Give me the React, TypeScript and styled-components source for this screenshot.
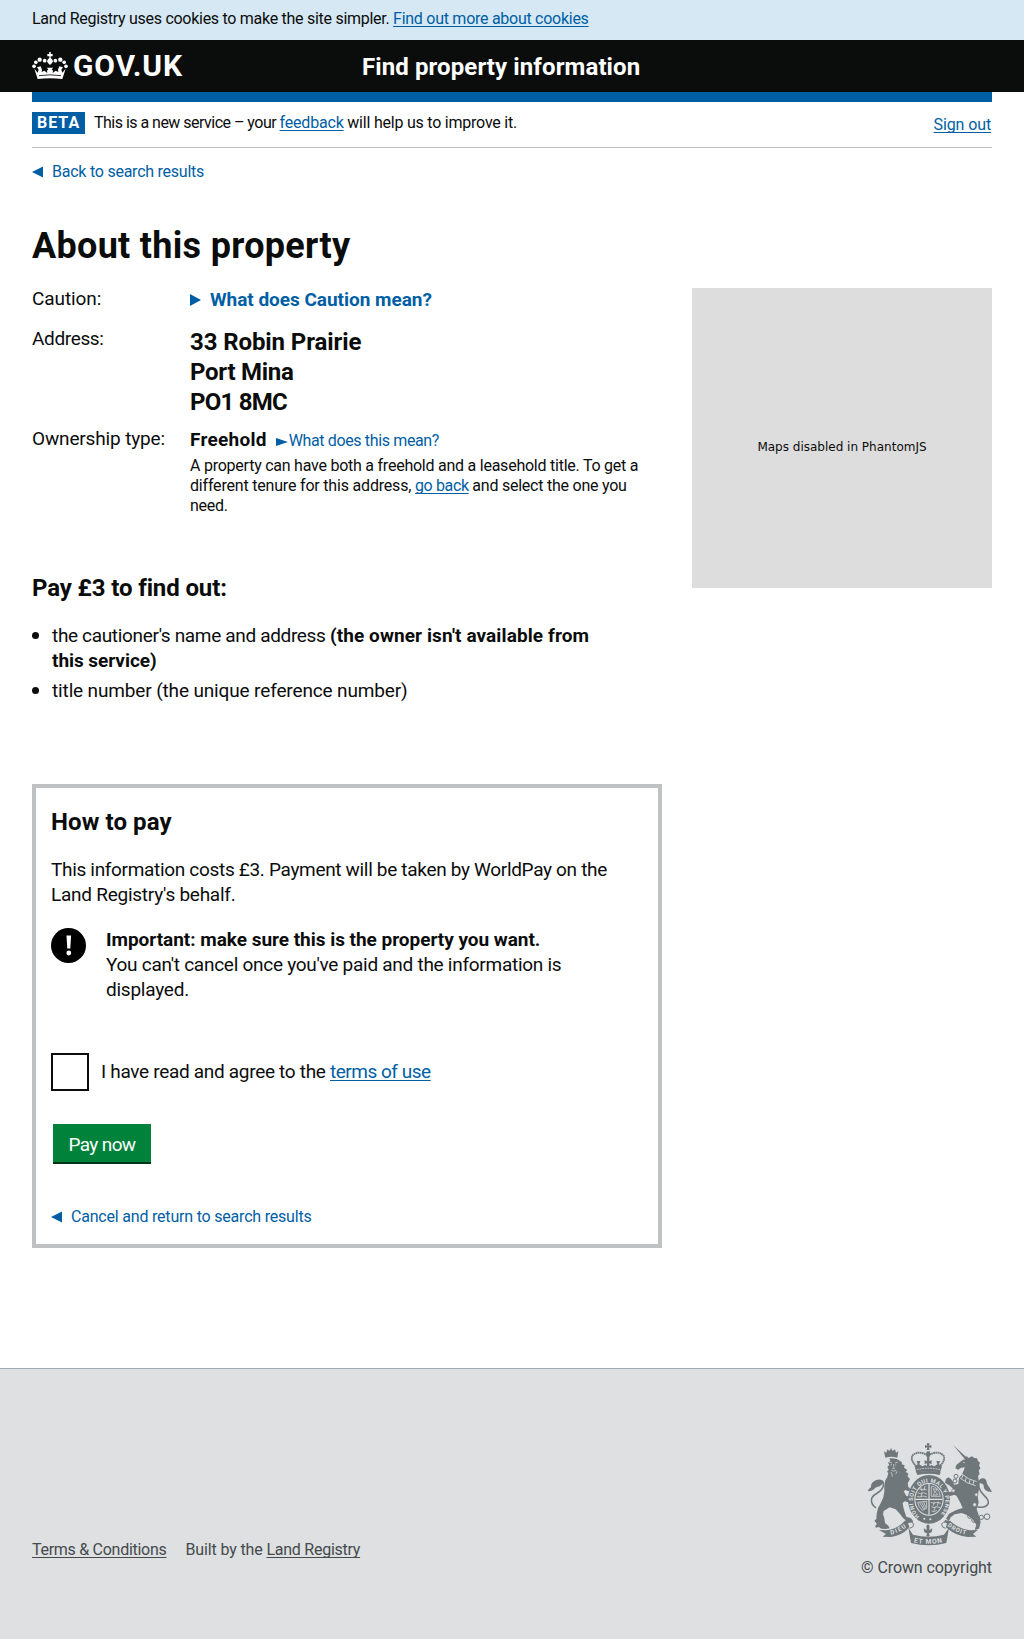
import React from "react";
import styled, { createGlobalStyle } from "styled-components";

const Global = createGlobalStyle`
  body {
    margin: 0;
    background: #fff;
    color: #0b0c0c;
    font: 400 16px/20px Roboto, "Liberation Sans", sans-serif;
  }
  *, *::before, *::after { box-sizing: border-box; }
  h1, h2, p, ul, dl, dt, dd { margin: 0; padding: 0; font-weight: 400; }
`;

const Run = styled.span<{ $ls?: number }>`
  letter-spacing: ${(p) => p.$ls ?? 0}px;
`;

const Strong = styled.strong<{ $ls?: number }>`
  font-weight: 700;
  letter-spacing: ${(p) => p.$ls ?? 0}px;
`;

const Link = styled.a<{ $ls?: number }>`
  color: #005ea5;
  letter-spacing: ${(p) => p.$ls ?? 0}px;
  text-decoration: underline;
  text-decoration-thickness: 1px;
  text-underline-offset: 2px;
  text-decoration-skip-ink: none;
`;

const CookieBar = styled.div`
  height: 40px;
  padding: 9px 32px 0;
  background: #d5e8f3;
`;

const Header = styled.header`
  display: flex;
  height: 52px;
  padding: 0 32px;
  background: #0b0c0c;
  color: #fff;
`;

const Brand = styled.a`
  display: flex;
  width: 330px;
  padding-top: 12px;
  gap: 5px;
  color: #fff;
  font-size: 30px;
  font-weight: 700;
  line-height: 30px;
  letter-spacing: 0.85px;
  svg { display: block; }
`;

const BrandName = styled.span`
  margin-top: -1px;
`;

const ServiceName = styled.span`
  padding-top: 12px;
  font-size: 24px;
  font-weight: 700;
  line-height: 30px;
  letter-spacing: 0.1px;
`;

const Page = styled.main`
  width: 960px;
  height: 1276px;
  margin: 0 32px;
  border-top: 10px solid #005ea5;
`;

const PhaseBanner = styled.div`
  display: flex;
  height: 46px;
  padding-top: 10px;
  border-bottom: 1px solid #bfc1c3;
`;

const PhaseTag = styled.strong`
  width: 53px;
  height: 22px;
  padding-left: 5px;
  background: #005ea5;
  color: #fff;
  font-weight: 700;
  line-height: 22px;
  letter-spacing: 1px;
`;

const PhaseText = styled.span`
  flex: 1;
  padding: 1px 0 0 9px;
`;

const SignOut = styled.span`
  padding: 3px 1px 0 0;
`;

const ArrowLink = styled.a<{ $ls: number; $top: number }>`
  display: flex;
  align-items: center;
  gap: 9px;
  height: 20px;
  margin-top: ${(p) => p.$top}px;
  color: #005ea5;
  letter-spacing: ${(p) => p.$ls}px;
`;

const Title = styled.h1`
  margin-top: 43px;
  font-size: 36px;
  font-weight: 700;
  line-height: 42px;
  letter-spacing: 0.3px;
`;

const Columns = styled.div`
  display: flex;
  justify-content: space-between;
  margin-top: 21px;
`;

const Details = styled.dl`
  display: grid;
  grid-template-columns: 158px 455px;
  grid-template-rows: 40px 100px auto;
  margin-top: -2px;
  font-size: 19px;
  line-height: 25px;
`;

const Label = styled.dt<{ $ls: number }>`
  letter-spacing: ${(p) => p.$ls}px;
`;

const Value = styled.dd`
  padding-top: 1px;
`;

const Summary = styled.a`
  display: flex;
  align-items: center;
  gap: 9px;
  color: #005ea5;
  font-weight: 700;
  letter-spacing: -0.03px;
`;

const AddressLine = styled.div<{ $ls: number }>`
  font-size: 24px;
  font-weight: 700;
  line-height: 30px;
  letter-spacing: ${(p) => p.$ls}px;
`;

const Tenure = styled.div`
  display: flex;
  align-items: baseline;
  svg { margin: 0 1px 0 9px; }
`;

const TenureHelp = styled.a`
  color: #005ea5;
  font-size: 16px;
  letter-spacing: -0.36px;
`;

const SmallText = styled.p`
  margin-top: 3px;
  font-size: 16px;
  line-height: 20px;
`;

const MapBox = styled.div`
  width: 300px;
  height: 300px;
  padding-top: 150px;
  background: #ddd;
  font: 12px/18px "DejaVu Sans", sans-serif;
  text-align: center;
`;

const Heading = styled.h2<{ $top: number; $ls: number }>`
  margin-top: ${(p) => p.$top}px;
  font-size: 24px;
  font-weight: 700;
  line-height: 30px;
  letter-spacing: ${(p) => p.$ls}px;
`;

const Bullets = styled.ul`
  width: 565px;
  margin-top: 20px;
  list-style: none;
  font-size: 19px;
  line-height: 25px;
`;

const Bullet = styled.li`
  display: flex;
  gap: 13px;
  margin-bottom: 5px;
  &::before {
    content: "";
    flex: none;
    width: 7px;
    height: 7px;
    margin-top: 9px;
    border-radius: 50%;
    background: #0b0c0c;
  }
`;

const PayBox = styled.section`
  width: 630px;
  height: 464px;
  margin-top: 81px;
  padding: 0 15px;
  border: 4px solid #bfc1c3;
`;

const Paragraph = styled.p<{ $width: number; $top?: number }>`
  width: ${(p) => p.$width}px;
  margin-top: ${(p) => p.$top ?? 0}px;
  font-size: 19px;
  line-height: 25px;
`;

const Warning = styled.div`
  display: flex;
  gap: 20px;
  margin-top: 20px;
`;

const WarningIcon = styled.svg`
  display: block;
  flex: none;
  margin-top: 1px;
`;

const Agree = styled.label`
  display: flex;
  gap: 12px;
  height: 38px;
  margin-top: 51px;
  font-size: 19px;
  line-height: 38px;
`;

const Checkbox = styled.span`
  width: 38px;
  height: 38px;
  border: 2px solid #0b0c0c;
`;

const PayButton = styled.button`
  display: block;
  width: 98px;
  height: 40px;
  margin: 33px 0 0 2px;
  padding: 2px 0 0;
  border: 0;
  border-bottom: 2px solid #003618;
  background: #00823b;
  color: #fff;
  font: 400 19px/25px Roboto, "Liberation Sans", sans-serif;
  letter-spacing: -0.63px;
`;

const Footer = styled.footer`
  display: flex;
  justify-content: space-between;
  height: 271px;
  padding: 74px 32px 0;
  border-top: 1px solid #a1acb2;
  background: #dee0e2;
  color: #454a4c;
`;

const FooterLinks = styled.div`
  display: flex;
  gap: 19px;
  padding-top: 97px;
`;

const FooterLink = styled(Link)`
  color: #454a4c;
`;

const Copyright = styled.div`
  display: flex;
  flex-direction: column;
  align-items: flex-end;
  gap: 12px;
  letter-spacing: -0.09px;
  svg { display: block; }
`;

const LeftArrow = () => (
  <svg width="11" height="12" viewBox="0 0 11 12">
    <path d="M0 6 11 .5v11Z" fill="#005ea5" />
  </svg>
);

const Crown = () => (
  <svg width="36" height="27" viewBox="96 155 108 81" fill="#fff">
    <path d="M146.500 156h7l-1.500 5h6v7h-6v5q6 4 7 10-2 7-9 11-7-4-9-11 1-6 7-10v-5h-6v-7h6Z" />
    {[
      [102, 198, 5.5],
      [107.5, 186, 5.5],
      [119, 178, 6.5],
      [134, 181, 5.5],
      [166, 181, 5.5],
      [181, 178, 6.5],
      [192.5, 186, 5.5],
      [198, 198, 5.5],
    ].map(([x, y, r]) => (
      <circle key={x} cx={x} cy={y} r={r} />
    ))}
    <path d="M103 205l10 12 3-9-5-7 11-3 4 10-1 7 8-4 9 7-1-7 4-4-5-5h20l-5 5 4 4-1 7 9-7 8 4-1-7 4-10 11 3-5 7 3 9 10-12-10 31q-37-5-74 0Z" />
    <path
      d="M117 226q33-5 66 0"
      stroke="#0b0c0c"
      strokeWidth="2.5"
      fill="none"
    />
  </svg>
);

const INK = "#6f777b";
const PAPER = "#dee0e2";

const Crest = () => (
  <svg width="125" height="103" viewBox="50 41 375 309" fill={INK}>
    {/* lion */}
    <path d="M105 85l-4-19 7 4 3-10 7 5 4-9 5 9 7-5 3 10 7-4-3 19q-18-5-36 0Z" />
    <path d="M107 90q16-6 34 0l8 5 6 4-1 6 9 3-2 7 10 7-5 5 9 7-4 6 8 9-3 5-4 8 2 11 7 7-6 6-9-4-6 4 8 14 14 2 5 8-5 14-9-5-9-3-7 4 2 14 4 14 5 14 14 5 6 8-2 12-8-5-9 3-7-5 4-7-8-7-9-12-13-14-18-6-18 11-2 10 4 12 2 14 10 8 4 8-12 2-13-1-8-5-8 2-3-5 5-4-2-8-3 1-1-7 5-2 1-16 4-18 8-14 8-18 3-17 0-16 3-18 6-10 3-12-4-4 5-6-4-9 6-5-4-7 7-5-3-8Z" />
    <path
      d="M77 236q-17-12-13-29 5-10 17-16 15-9 18-21 3-10-5-16"
      fill="none"
      stroke={INK}
      strokeWidth="4.5"
    />
    <path d="M52 185q5-9 10-11-1-11 7-17 10-8 22-6 8 2 7 9-6 11-16 12-8 2-11 8-7 7-19 5Z" />
    <path
      d="M116 98l9 3M134 101l9-3M121 106l4 1M138 107l-4 0M130 104v10M126 117h8M123 123q8 5 15 0M122 128q4 6 4 14M140 126q-1 6-5 9"
      fill="none"
      stroke={PAPER}
      strokeWidth="2"
    />
    {/* unicorn */}
    <path d="M309 48l41 37-5 6Z" />
    <path d="M345 90L349 79L354 86L365 81L372 86L380 87L383 95L389 100L386 108L390 117L385 124L388 134L383 140L386 158L386 180L382 200L385 220L379 240L386 260L391 278L386 298L373 302L378 286L366 269L350 257L334 251L313 255L301 264L296 275L287 268L296 253L318 242L337 236L330 220L319 200L312 196L298 201L289 196L297 188L310 186L306 176L296 168L284 160L287 148L295 144L304 151L312 166L324 164L326 146L334 136L341 122L343 114L333 115L323 121L315 117L318 107L328 99L338 91Z" />
    <path
      d="M381 232q25 6 33-10 2-10-12-23-13-12-16-25-2-12 3-22"
      fill="none"
      stroke={INK}
      strokeWidth="4.5"
    />
    <path d="M386 162q-2-12 9-15 13-1 14 12 2 10 8 15l8 14q-14 0-20-6-6-6-5-14-3-8-14-6Z" />
    <path
      d="M333 133q20 18 46 24M329 146q20 17 47 23M338 137l-4 10M348 144l-3 11M359 150l-2 12M370 155l-2 11"
      fill="none"
      stroke={PAPER}
      strokeWidth="2.5"
    />
    <path d="M338 99l6 1" stroke={PAPER} strokeWidth="2" />
    <g fill="none" stroke={INK} strokeWidth="3">
      <circle cx="317" cy="141" r="6" />
      <circle cx="314" cy="155" r="6" />
      <circle cx="358" cy="261" r="6" />
      <circle cx="371" cy="272" r="7" />
      <circle cx="393" cy="264" r="6.5" />
      <circle cx="410" cy="262" r="8.500" />
      <path d="M378 270l9-4" />
    </g>
    <g fill={PAPER} stroke={INK} strokeWidth="2">
      <circle cx="378" cy="196" r="5" />
      <circle cx="373" cy="226" r="5.5" />
      <circle cx="309" cy="184" r="5" />
    </g>
    {/* royal crown */}
    <path d="M229 42h9l-2 7 7-2v9l-7-2 2 8h-9l2-8-7 2v-9l7 2Z" />
    <path
      d="M199 112q-22-22-11-35 12-10 27-6 15 3 18 12 3-9 18-12 15-4 27 6 11 13-11 35"
      fill="none"
      stroke={INK}
      strokeWidth="5.5"
      strokeDasharray="5 1.2"
    />
    <path d="M230 66h8l3 8-4 9v13l7-4v13l-7-3 1 11h-9l1-11-7 3V92l7 4V83l-4-9Z" />
    <path d="M193 111l9-6-3-10h11l-3 10 9 6 9-4 9 6 9-6 9 4 9-6-3-10h11l-3 10 9 6-6 19q-36-8-71 0Z" />
    <path
      d="M200 121q35-8 69 0"
      fill="none"
      stroke={PAPER}
      strokeWidth="2.5"
      strokeDasharray="5 3"
    />
    <path d="M198 129q36-8 73 0l-3 8q-34-7-67 0Z" />
    {/* garter and shield */}
    <ellipse cx="236" cy="210" rx="63" ry="73" />
    <ellipse cx="236" cy="210" rx="44" ry="49" fill={PAPER} />
    <ellipse cx="236" cy="210" rx="41" ry="46" />
    <path d="M236 164v92M195 210h82" stroke={PAPER} strokeWidth="3.5" fill="none" />
    <g fill="none" stroke={PAPER} strokeWidth="2.2">
      <path d="M206 178l7 3 8-2 9 3M202 190l8 3 9-3 11 4M200 201l9 2 9-3 12 3M211 173l4 12M224 170l-3 14M215 190l-3 13" />
      <path d="M242 219l8 3 9-3 13 3M243 232l8 3 9-3 9 3M244 245l8 2 7-4M252 217l-3 12M264 217l-3 12M255 232l-4 12" />
      <path d="M243 172h8l13 9 6 20h-27ZM249 178l11 3-5 7 8 8-14 2 4-9Z" />
      <path d="M202 219q3 14 14 24l13-6V216ZM208 220l12 20M214 219l10 20M220 218l7 17" />
    </g>
    <defs>
      <path id="garter" d="M208 261A49 56 0 1 1 265 261" />
      <path id="dieu" d="M122 316q30-7 51-27" />
      <path id="etmon" d="M190 339q45 9 88 0" />
      <path id="droit" d="M291 289q26 25 72 29" />
    </defs>
    <text fill={PAPER} fontFamily="Roboto, sans-serif" fontSize="17" fontWeight="700">
      <textPath href="#garter" textLength="258">
        HONI SOIT QUI MAL Y PENSE
      </textPath>
    </text>
    <circle cx="222" cy="268" r="3" fill={PAPER} />
    <circle cx="240" cy="270" r="3" fill={PAPER} />
    {/* motto ribbon */}
    <path d="M86 302l22 1q34-4 55-28l13-3 8 18-9 6q-22 24-54 27l-24-1 10-8Z" />
    <path d="M382 302l-22 1q-34-4-60-28l-16-3-6 18 12 6q27 24 62 27l26-1-10-8Z" />
    <path
      d="M173 280q13-5 17 5 1 9-12 12M290 280q-12-5-16 5-1 9 12 12"
      fill={PAPER}
      stroke={INK}
      strokeWidth="3"
    />
    <path d="M174 295l14 21q47 12 93 0l15-21-8 46q-52 14-106 0Z" />
    <path d="M228 290l5-6 5 6-1 12 9-5-2 12-8 3 2 8-5 2-5-2 2-8-8-3-2-12 9 5Z" />
    <g fill={PAPER} fontFamily="Roboto, sans-serif" fontWeight="700">
      <text fontSize="18">
        <textPath href="#dieu" textLength="52">DIEU</textPath>
      </text>
      <text fontSize="20">
        <textPath href="#etmon" textLength="86">ET MON</textPath>
      </text>
      <text fontSize="18">
        <textPath href="#droit" textLength="62">DROIT</textPath>
      </text>
    </g>
  </svg>
);

export default function App() {
  return (
    <>
      <Global />
      <CookieBar>
        <Run $ls={-0.28}>Land Registry uses cookies to make the site simpler. </Run>
        <Link $ls={-0.27}>Find out more about cookies</Link>
      </CookieBar>
      <Header>
        <Brand>
          <Crown />
          <BrandName>GOV.UK</BrandName>
        </Brand>
        <ServiceName>Find property information</ServiceName>
      </Header>
      <Page>
        <PhaseBanner>
          <PhaseTag>BETA</PhaseTag>
          <PhaseText>
            <Run $ls={-0.52}>This is a new service – your </Run>
            <Link $ls={-0.19}>feedback</Link>
            <Run $ls={-0.22}> will help us to improve it.</Run>
          </PhaseText>
          <SignOut>
            <Link $ls={-0.12}>Sign out</Link>
          </SignOut>
        </PhaseBanner>
        <ArrowLink $ls={-0.24} $top={14}>
          <LeftArrow />
          Back to search results
        </ArrowLink>
        <Title>About this property</Title>
        <Columns>
          <Details>
            <Label $ls={-0.1}>Caution:</Label>
            <Value>
              <Summary>
                <svg width="11" height="12" viewBox="0 0 11 12">
                  <path d="M0 0 11 6 0 12Z" fill="#005ea5" />
                </svg>
                What does Caution mean?
              </Summary>
            </Value>
            <Label $ls={-0.35}>Address:</Label>
            <Value>
              <AddressLine $ls={-0.1}>33 Robin Prairie</AddressLine>
              <AddressLine $ls={-0.27}>Port Mina</AddressLine>
              <AddressLine $ls={-0.75}>PO1 8MC</AddressLine>
            </Value>
            <Label $ls={-0.15}>Ownership type:</Label>
            <Value>
              <Tenure>
                <Strong $ls={0.26}>Freehold</Strong>
                <svg width="12" height="8" viewBox="0 0 12 8">
                  <path d="M0 0 12 4 0 8Z" fill="#005ea5" />
                </svg>
                <TenureHelp>What does this mean?</TenureHelp>
              </Tenure>
              <SmallText>
                <Run $ls={-0.24}>
                  A property can have both a freehold and a leasehold title. To get a
                </Run>{" "}
                <Run $ls={-0.19}>different tenure for this address, </Run>
                <Link $ls={-0.37}>go back</Link>
                <Run $ls={-0.24}> and select the one you</Run>{" "}
                <Run $ls={-0.24}>need.</Run>
              </SmallText>
            </Value>
          </Details>
          <MapBox>Maps disabled in PhantomJS</MapBox>
        </Columns>
        <Heading $top={-15} $ls={-0.12}>
          Pay £3 to find out:
        </Heading>
        <Bullets>
          <Bullet>
            <div>
              <Run $ls={-0.34}>the cautioner's name and address </Run>
              <Strong $ls={0.1}>(the owner isn't available from</Strong>{" "}
              <Strong $ls={-0.05}>this service)</Strong>
            </div>
          </Bullet>
          <Bullet>
            <Run $ls={-0.14}>title number (the unique reference number)</Run>
          </Bullet>
        </Bullets>
        <PayBox>
          <Heading $top={19} $ls={0.1}>
            How to pay
          </Heading>
          <Paragraph $width={575} $top={20}>
            <Run $ls={-0.32}>
              This information costs £3. Payment will be taken by WorldPay on the
            </Run>{" "}
            <Run $ls={-0.25}>Land Registry's behalf.</Run>
          </Paragraph>
          <Warning>
            <WarningIcon width="35" height="35" viewBox="0 0 35 35">
              <circle cx="17.5" cy="17.5" r="17.5" fill="#000" />
              <path d="M15.5 7.5h4.600l-.8 13h-3Z" fill="#fff" />
              <circle cx="17.8" cy="25" r="2.400" fill="#fff" />
            </WarningIcon>
            <Paragraph $width={500}>
              <Strong $ls={-0.03}>Important: make sure this is the property you want.</Strong>
              <br />
              <Run $ls={-0.27}>You can't cancel once you've paid and the information is</Run>{" "}
              <Run $ls={-0.24}>displayed.</Run>
            </Paragraph>
          </Warning>
          <Agree>
            <Checkbox />
            <span>
              <Run $ls={-0.31}>I have read and agree to the </Run>
              <Link $ls={-0.48}>terms of use</Link>
            </span>
          </Agree>
          <PayButton>Pay now</PayButton>
          <ArrowLink $ls={-0.2} $top={43}>
            <LeftArrow />
            Cancel and return to search results
          </ArrowLink>
        </PayBox>
      </Page>
      <Footer>
        <FooterLinks>
          <FooterLink $ls={-0.28}>Terms &amp; Conditions</FooterLink>
          <span>
            <Run $ls={-0.13}>Built by the </Run>
            <FooterLink $ls={-0.26}>Land Registry</FooterLink>
          </span>
        </FooterLinks>
        <Copyright>
          <Crest />
          <span>© Crown copyright</span>
        </Copyright>
      </Footer>
    </>
  );
}
